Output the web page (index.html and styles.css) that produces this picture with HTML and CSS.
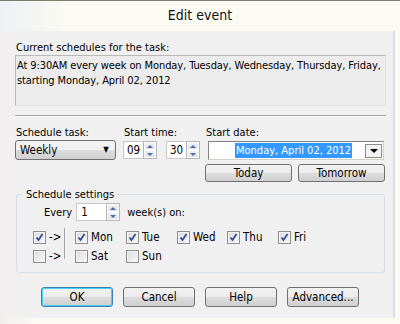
FILE: index.html
```
<!DOCTYPE html>
<html lang="en">
<head>
    <meta charset="UTF-8">
    <title>Edit event</title>
    <link rel="stylesheet" href="styles.css">
</head>
<body>
    <div class="frame">
        <div class="titlebar">Edit event</div>

        <div class="client">
            <div class="label">Current schedules for the task:</div>
            <div class="summary">At 9:30AM every week on Monday, Tuesday, Wednesday, Thursday, Friday,<br>starting Monday, April 02, 2012</div>

            <div class="sep"></div>

            <div class="schedule-row">
                <div class="col">
                    <div class="label">Schedule task:</div>
                    <div class="combo">Weekly<span class="arrow">&#9660;</span></div>
                </div>
                <div class="col">
                    <div class="label">Start time:</div>
                    <div class="time">
                        <div class="spin"><span class="field">09</span><span class="updown"><i class="up"></i><i class="down"></i></span></div>
                        <div class="spin"><span class="field">30</span><span class="updown"><i class="up"></i><i class="down"></i></span></div>
                    </div>
                </div>
                <div class="col">
                    <div class="label">Start date:</div>
                    <div class="datepick">
                        <span class="date-text"><span class="selected">Monday, April 02, 2012</span></span>
                        <span class="drop"><span class="drop-arrow"></span></span>
                    </div>
                    <div class="date-buttons">
                        <button class="btn">Today</button>
                        <button class="btn">Tomorrow</button>
                    </div>
                </div>
            </div>

            <fieldset class="settings">
                <legend>Schedule settings</legend>
                <div class="every">
                    <span>Every</span>
                    <div class="spin wide"><span class="field">1</span><span class="updown"><i class="up"></i><i class="down"></i></span></div>
                    <span>week(s) on:</span>
                </div>
                <div class="days">
                    <div class="toggles">
                        <label class="chk"><span class="box on"></span>-&gt;</label>
                        <label class="chk"><span class="box"></span>-&gt;</label>
                    </div>
                    <div class="vline"></div>
                    <div class="day-grid">
                        <label class="chk"><span class="box on"></span>Mon</label>
                        <label class="chk"><span class="box on"></span>Tue</label>
                        <label class="chk"><span class="box on"></span>Wed</label>
                        <label class="chk"><span class="box on"></span>Thu</label>
                        <label class="chk"><span class="box on"></span>Fri</label>
                        <label class="chk"><span class="box"></span>Sat</label>
                        <label class="chk"><span class="box"></span>Sun</label>
                    </div>
                </div>
            </fieldset>

            <div class="buttons">
                <button class="btn default">OK</button>
                <button class="btn">Cancel</button>
                <button class="btn">Help</button>
                <button class="btn">Advanced...</button>
            </div>
        </div>
    </div>
</body>
</html>
```

FILE: styles.css
```
/* Reset */
* {
    margin: 0;
    padding: 0;
    box-sizing: border-box;
}

body {
    width: 400px;
    height: 324px;
    overflow: hidden;
    font-family: 'DejaVu Sans Condensed', 'DejaVu Sans', sans-serif;
    font-size: 11px;
    color: #000;
    background: linear-gradient(to right, #f3eeee, #fbfbf4 40px);
}

/* Window */
.frame {
    height: 324px;
    border-top: 1px solid #7d7d70;
}

.titlebar {
    height: 30px;
    text-align: center;
    font-size: 14px;
    line-height: 29px;
    color: #111;
    background: linear-gradient(to right, #eef0f4 0, #fbfbf3 70px);
}

.client {
    margin-left: 5px;
    width: 390px;
    height: 287px;
    background-color: #f0f0f0;
    border-right: 2px solid #dedede;
    padding: 10px 8px 0 10px;
}

.label {
    line-height: 13px;
    padding-left: 1px;
}

.summary {
    margin-top: 1px;
    height: 51px;
    width: 371px;
    padding: 2px 1px;
    line-height: 15px;
    letter-spacing: -0.1px;
    white-space: nowrap;
    background-color: #ececec;
    border: 1px solid #b9b9b9;
    border-right-color: #e3e3e3;
    border-bottom-color: #e3e3e3;
}

.sep {
    margin-top: 9px;
    width: 371px;
    border-top: 1px solid #a0a0a0;
    border-bottom: 1px solid #ffffff;
}

/* Schedule row */
.schedule-row {
    margin-top: 9px;
    display: grid;
    grid-template-columns: 108px 82px 181px;
}

.combo {
    margin-top: 1px;
    width: 101px;
    height: 20px;
    padding: 0 0 0 4px;
    line-height: 18px;
    font-size: 11.5px;
    border: 1px solid #707070;
    border-radius: 3px;
    background: linear-gradient(#f2f2f2 50%, #dddddd 50%, #d0d0d0);
    display: flex;
    justify-content: space-between;
}

.combo .arrow {
    font-size: 8px;
    width: 18px;
    text-align: center;
}

.time {
    display: flex;
    gap: 9px;
    margin-top: 2px;
}

.spin {
    display: flex;
    height: 18px;
}

.spin .field {
    width: 20px;
    padding-left: 3px;
    line-height: 16px;
    font-size: 11.5px;
    background: #fff;
    border: 1px solid #c8c8c8;
    border-right: none;
}

.spin.wide .field {
    width: 30px;
    padding-left: 4px;
}

.updown {
    width: 14px;
    display: flex;
    flex-direction: column;
    border: 1px solid #b5b5b5;
    background: #fff;
}

.updown i {
    flex: 1;
    display: flex;
    align-items: center;
    justify-content: center;
    background: linear-gradient(#eef0f4, #dfe3ea);
    border: 1px solid #fff;
}

.updown i::after {
    content: '';
    border-left: 3px solid transparent;
    border-right: 3px solid transparent;
}

.updown .up::after {
    border-bottom: 3px solid #4d6ca8;
}

.updown .down::after {
    border-top: 3px solid #4d6ca8;
}

.datepick {
    margin: 2px 0 0 3px;
    width: 176px;
    height: 19px;
    display: flex;
    align-items: center;
    background: #fff;
    border: 1px solid #828282;
    border-right-color: #d4d0c8;
    border-bottom-color: #d4d0c8;
}

.date-text {
    flex: 1;
    padding-left: 26px;
    font-size: 11px;
}

.selected {
    background: #3399ff;
    color: #fff;
    padding: 1px 1px;
}

.drop {
    width: 17px;
    height: 14px;
    margin-right: 1px;
    border: 1px solid #8a8a8a;
    background: #f4f4f4;
    display: flex;
    align-items: center;
    justify-content: center;
}

.drop-arrow {
    border-left: 4px solid transparent;
    border-right: 4px solid transparent;
    border-top: 4px solid #000;
}

.date-buttons {
    margin-top: 4px;
    display: flex;
    gap: 6px;
}

.date-buttons .btn {
    width: 87px;
    height: 18px;
}

/* Buttons */
.btn {
    font-family: inherit;
    font-size: 11.5px;
    color: #000;
    height: 19px;
    border: 1px solid #707070;
    border-radius: 3px;
    background: linear-gradient(#f2f2f2 0, #ebebeb 50%, #dddddd 50%, #cfcfcf 100%);
}

.btn.default {
    border-color: #3c7fb1;
    box-shadow: inset 0 0 0 1px #48d0f8;
}

/* Schedule settings */
.settings {
    margin: 6px 0 0 1px;
    width: 369px;
    height: 85px;
    border: 1px solid #d5dfe5;
    border-radius: 3px;
    padding: 0;
}

.settings legend {
    margin-left: 6px;
    padding: 0 3px;
    font-size: 11px;
    line-height: 13px;
}

.every {
    margin-top: 2px;
    margin-left: 27px;
    display: flex;
    align-items: center;
    gap: 4px;
}

.every .spin {
    margin-right: 3px;
}

.days {
    margin-top: 7px;
    margin-left: 16px;
    display: flex;
}

.toggles {
    width: 28px;
    display: flex;
    flex-direction: column;
    gap: 6px;
    padding-top: 3px;
}

.vline {
    margin: 0 9px 0 3px;
    width: 2px;
    height: 31px;
    border-left: 1px solid #a0a0a0;
    border-right: 1px solid #fff;
}

.day-grid {
    display: grid;
    grid-template-columns: 51px 51px 50px 51px 51px;
    row-gap: 6px;
    padding-top: 3px;
}

.chk {
    display: flex;
    align-items: center;
    gap: 3px;
    white-space: nowrap;
    font-size: 11.5px;
    line-height: 13px;
}

.box {
    flex: none;
    width: 13px;
    height: 13px;
    border: 1px solid #8f8f8f;
    background: linear-gradient(135deg, #dcdcdc, #f8f8f8);
    box-shadow: inset 0 0 0 1px #f4f4f4;
}

.box.on {
    background: url("data:image/svg+xml;utf8,<svg xmlns='http://www.w3.org/2000/svg' width='11' height='11'><path d='M2.5 5.5 L4.5 8 L8.5 2' fill='none' stroke='%23344c96' stroke-width='1.8'/></svg>") center no-repeat, linear-gradient(135deg, #dcdcdc, #f8f8f8);
}

.buttons {
    margin-top: 14px;
    padding-left: 26px;
    display: flex;
    gap: 10px;
}

.buttons .btn {
    width: 72px;
    height: 20px;
}
```
